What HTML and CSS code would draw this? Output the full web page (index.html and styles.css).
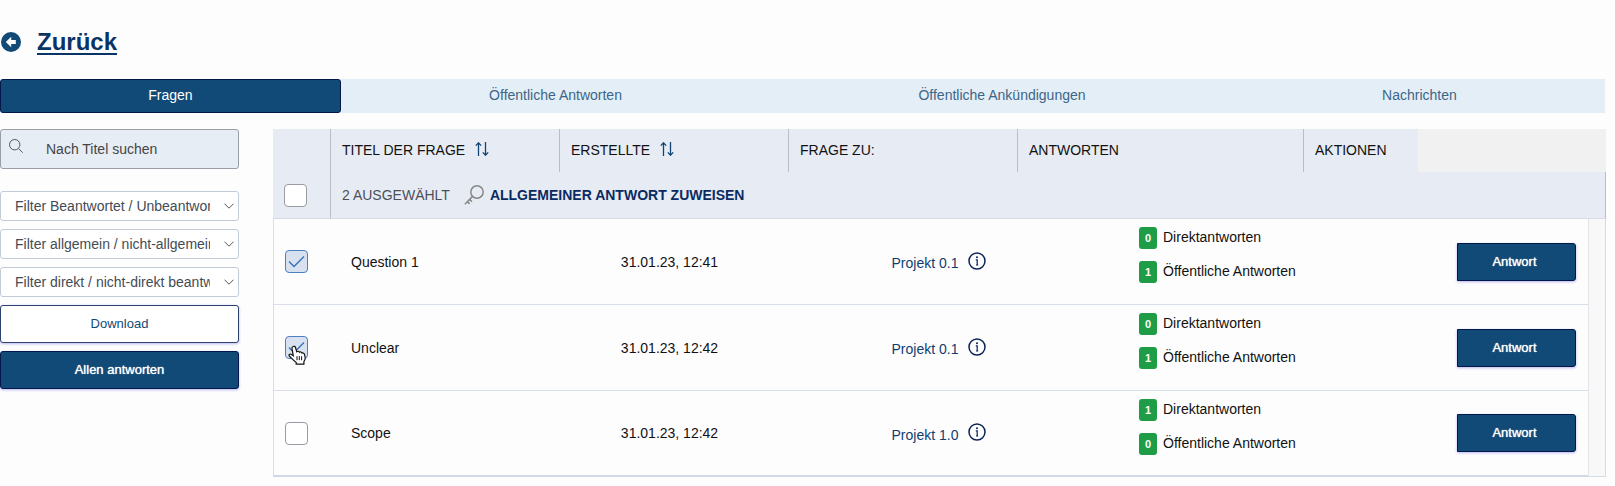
FILE: index.html
```
<!DOCTYPE html>
<html lang="de">

<head>
    <meta charset="UTF-8">
    <meta name="viewport" content="width=device-width, initial-scale=1.0">
    <title>Fragen</title>
    <link rel="stylesheet" href="styles.css">
</head>

<body>
    <svg class="sprite" aria-hidden="true">
        <symbol id="chevron" viewBox="0 0 10 6">
            <path d="M.5.7 5 5.2 9.500.7" fill="none" stroke="currentColor" />
        </symbol>
        <symbol id="sort" viewBox="0 0 14 14">
            <path d="M3.500 14V.8M.8 3.600 3.500.8l2.700 2.800M10.500 0v13.200M7.800 10.400l2.700 2.800 2.700-2.800" fill="none" stroke="currentColor" stroke-width="1.300" />
        </symbol>
        <symbol id="info" viewBox="0 0 18 18">
            <circle cx="9" cy="9" r="8" fill="none" stroke="currentColor" stroke-width="1.500" />
            <path d="M7.800 7.800H9.200V13M8 13h2.200" fill="none" stroke="currentColor" stroke-width="1.200" />
            <circle cx="9" cy="5.300" r="1" fill="currentColor" />
        </symbol>
    </svg>

    <header class="page-header">
        <svg class="back-icon" viewBox="0 0 20 20" aria-hidden="true">
            <circle cx="10" cy="10" r="10" fill="#114a76" />
            <path d="M10.200 4.800v3.300h4.600v3.800h-4.600v3.300L4.800 10z" fill="#fff" />
        </svg>
        <a class="back-link" href="#">Zurück</a>
    </header>

    <nav class="tabs">
        <a class="tab active" href="#">Fragen</a>
        <a class="tab" href="#">Öffentliche Antworten</a>
        <a class="tab" href="#">Öffentliche Ankündigungen</a>
        <a class="tab" href="#">Nachrichten</a>
    </nav>

    <main class="content">
        <aside class="sidebar">
            <label class="search">
                <svg class="search-icon" viewBox="0 0 14 14" aria-hidden="true">
                    <circle cx="5.700" cy="5.700" r="5.200" fill="none" stroke="currentColor" />
                    <path d="m9.500 9.500 4.200 4.200" stroke="currentColor" />
                </svg>
                <input type="text" placeholder="Nach Titel suchen" aria-label="Nach Titel suchen">
            </label>
            <div class="filter">
                <select aria-label="Filter Beantwortet">
                    <option>Filter Beantwortet / Unbeantwortet</option>
                </select>
                <svg class="chevron"><use href="#chevron" /></svg>
            </div>
            <div class="filter">
                <select aria-label="Filter allgemein">
                    <option>Filter allgemein / nicht-allgemein</option>
                </select>
                <svg class="chevron"><use href="#chevron" /></svg>
            </div>
            <div class="filter">
                <select aria-label="Filter direkt">
                    <option>Filter direkt / nicht-direkt beantwortet</option>
                </select>
                <svg class="chevron"><use href="#chevron" /></svg>
            </div>
            <button class="btn btn-outline" type="button">Download</button>
            <button class="btn" type="button">Allen antworten</button>
        </aside>

        <table class="questions">
            <colgroup>
                <col class="col-check">
                <col class="col-text">
                <col class="col-text">
                <col class="col-text">
                <col class="col-answers">
                <col class="col-actions">
                <col>
                <col class="col-scroll">
            </colgroup>
            <thead>
                <tr class="head-row">
                    <td></td>
                    <th>Titel der Frage <svg class="sort"><use href="#sort" /></svg></th>
                    <th>Erstellte <svg class="sort"><use href="#sort" /></svg></th>
                    <th>Frage zu:</th>
                    <th>Antworten</th>
                    <th>Aktionen</th>
                    <td class="head-rest" colspan="2"></td>
                </tr>
                <tr class="bulk-row">
                    <td class="check"><input type="checkbox" aria-label="Alle auswählen"></td>
                    <td class="bulk-cell" colspan="7">
                        <div class="bulk">
                            <span>2 ausgewählt</span>
                            <button class="assign" type="button">
                                <svg class="key" viewBox="0 0 20 20" aria-hidden="true">
                                    <circle cx="13" cy="7" r="6.200" />
                                    <path d="M8.600 11.400.8 19.200M5.600 14.400l2.300 2.300M3.400 16.600l2.300 2.300" />
                                </svg>
                                Allgemeiner Antwort zuweisen
                            </button>
                        </div>
                    </td>
                </tr>
            </thead>
            <tbody>
                <tr>
                    <td class="check"><input type="checkbox" aria-label="Question 1" checked></td>
                    <td class="title">Question 1</td>
                    <td class="date">31.01.23, 12:41</td>
                    <td class="project">
                        <div class="project-box">
                            <a href="#">Projekt 0.1</a>
                            <svg class="info"><use href="#info" /></svg>
                        </div>
                    </td>
                    <td class="answers">
                        <div class="answer"><span class="badge">0</span>Direktantworten</div>
                        <div class="answer"><span class="badge">1</span>Öffentliche Antworten</div>
                    </td>
                    <td class="action" colspan="2"><button class="btn" type="button">Antwort</button></td>
                    <td class="scroll" rowspan="3"></td>
                </tr>
                <tr>
                    <td class="check">
                        <input type="checkbox" aria-label="Unclear" checked>
                        <svg class="pointer" viewBox="0 0 18 20" aria-hidden="true">
                            <path d="M5.200 1.500c1-.6 2 0 2.300 1l1.200 4.200c.9-.8 2.300-.5 2.700.5 1-.6 2.200-.2 2.500.8 1.200-.4 2.400.3 2.700 1.600l.6 3.400c.1 1.500-.9 2.400-1.300 3.600v2.500H8.200v-1.700C5.600 15.700 4 13.700 1.300 11c-.8-1 .3-2.500 1.700-1.800l2.300 1.500L4 3.500c-.1-.9.400-1.700 1.200-2z" fill="#fff" stroke="#111" stroke-width="1.200" />
                            <path d="M9 11.200v4M11.300 11.200v4M13.600 11.200v4" stroke="#111" />
                        </svg>
                    </td>
                    <td class="title">Unclear</td>
                    <td class="date">31.01.23, 12:42</td>
                    <td class="project">
                        <div class="project-box">
                            <a href="#">Projekt 0.1</a>
                            <svg class="info"><use href="#info" /></svg>
                        </div>
                    </td>
                    <td class="answers">
                        <div class="answer"><span class="badge">0</span>Direktantworten</div>
                        <div class="answer"><span class="badge">1</span>Öffentliche Antworten</div>
                    </td>
                    <td class="action" colspan="2"><button class="btn" type="button">Antwort</button></td>
                </tr>
                <tr>
                    <td class="check"><input type="checkbox" aria-label="Scope"></td>
                    <td class="title">Scope</td>
                    <td class="date">31.01.23, 12:42</td>
                    <td class="project">
                        <div class="project-box">
                            <a href="#">Projekt 1.0</a>
                            <svg class="info"><use href="#info" /></svg>
                        </div>
                    </td>
                    <td class="answers">
                        <div class="answer"><span class="badge">1</span>Direktantworten</div>
                        <div class="answer"><span class="badge">0</span>Öffentliche Antworten</div>
                    </td>
                    <td class="action" colspan="2"><button class="btn" type="button">Antwort</button></td>
                </tr>
            </tbody>
        </table>
    </main>
</body>

</html>
```
FILE: styles.css
```
* {
    box-sizing: border-box;
}

body {
    background-color: #fefdfe;
    color: #111;
    font-family: "Liberation Sans", Arial, sans-serif;
    font-size: 14px;
    line-height: 20px;
    margin: 0;
    padding: 28px 9px 0 0;
}

button,
input,
select {
    font: inherit;
    color: inherit;
    margin: 0;
}

a {
    color: #0f3d70;
    text-decoration: none;
}

.sprite {
    display: none;
}

.page-header {
    display: flex;
    align-items: center;
    gap: 16px;
    padding-left: 1px;
    margin-bottom: 23px;
}

.back-icon {
    width: 20px;
    height: 20px;
}

.back-link {
    color: #0a3466;
    font-size: 24px;
    font-weight: bold;
    line-height: 28px;
    text-decoration: underline;
    text-decoration-thickness: 2px;
    text-underline-offset: 3px;
}

.tabs {
    display: flex;
    background-color: #e4eef6;
    margin-right: 1px;
}

.tab {
    flex: 1 1 auto;
    padding: 5px 0 7px;
    border: 1px solid transparent;
    color: #3c6688;
    text-align: center;
}

.tab.active {
    background-color: #114a76;
    border-color: #02174a;
    border-radius: 3px;
    color: #fff;
}

.content {
    display: flex;
    align-items: flex-start;
    gap: 34px;
    margin-top: 16px;
}

/* sidebar */

.sidebar {
    display: flex;
    flex-direction: column;
    flex: 0 0 239px;
    gap: 8px;
}

.search {
    display: flex;
    align-items: center;
    height: 40px;
    margin-bottom: 14px;
    padding-left: 8px;
    background-color: #e7edf4;
    border: 1px solid #999fa5;
    border-radius: 3px;
}

.search-icon {
    flex: none;
    width: 14px;
    height: 14px;
    margin-bottom: 6px;
    color: #555;
}

.search input {
    flex: 1;
    min-width: 0;
    padding: 0 0 0 23px;
    background: none;
    border: 0;
}

.search input::placeholder {
    color: #444;
    opacity: 1;
}

.filter {
    display: grid;
    align-items: center;
}

.filter select {
    grid-area: 1 / 1;
    appearance: none;
    width: 100%;
    height: 30px;
    padding: 0 28px 0 14px;
    background-color: #fff;
    border: 1px solid #c3ccd6;
    border-radius: 3px;
    color: #444c55;
}

.chevron {
    grid-area: 1 / 1;
    justify-self: end;
    width: 10px;
    height: 6px;
    margin-right: 5px;
    color: #555;
    pointer-events: none;
}

.btn {
    height: 38px;
    background-color: #114a76;
    border: 1px solid #02174a;
    border-radius: 3px;
    box-shadow: 0 1px 3px #b9b5ee;
    color: #fff;
    font-size: 13px;
    text-shadow: 0 0 1px #fff;
}

.btn-outline {
    background-color: #fff;
    border-color: #2a4370;
    color: #114a76;
    text-shadow: none;
}

/* questions table */

.questions {
    flex: 1;
    width: 100%;
    min-width: 0;
    table-layout: fixed;
    border-collapse: separate;
    border-spacing: 0;
}

.col-check {
    width: 57px;
}

.col-text {
    width: 229px;
}

.col-answers {
    width: 286px;
}

.col-actions {
    width: 115px;
}

.col-scroll {
    width: 18px;
}

th,
td {
    padding: 0;
}

.head-row {
    height: 43px;
    background-color: #e7ecf4;
}

.head-row th {
    padding: 0 11px 2px;
    border-left: 1px solid #b9bec8;
    font-weight: normal;
    text-align: left;
    text-transform: uppercase;
}

.head-row .head-rest {
    background-color: #f1f1f1;
}

.sort {
    width: 14px;
    height: 14px;
    margin-left: 6px;
    color: #0f4476;
    vertical-align: -1px;
}

.bulk-row {
    height: 47px;
    background-color: #e7ecf4;
}

.bulk-row td {
    border-bottom: 1px solid #d5dce4;
}

.bulk-row .bulk-cell {
    padding-left: 11px;
    border-left: 1px solid #b9bec8;
    border-right: 1px solid #b9bec8;
}

.bulk {
    display: flex;
    align-items: center;
    gap: 14px;
    color: #4b5058;
    text-transform: uppercase;
}

.assign {
    display: flex;
    align-items: center;
    gap: 6px;
    padding: 0;
    background: none;
    border: 0;
    color: #0a2a62;
    font-weight: bold;
    text-transform: uppercase;
}

.key {
    width: 20px;
    height: 20px;
    fill: none;
    stroke: #888;
    stroke-width: 1.5;
}

.check {
    position: relative;
    padding-left: 11px;
}

.check input {
    appearance: none;
    display: block;
    width: 23px;
    height: 23px;
    background: #fff center / 17px 13px no-repeat;
    border: 1px solid #989ba2;
    border-radius: 4px;
}

.check input:checked {
    background-color: #d7e1ef;
    background-image: url("data:image/svg+xml,%3Csvg xmlns='http://www.w3.org/2000/svg' viewBox='0 0 17 13'%3E%3Cpath d='M1 6.500 6 11.500 16 1.500' fill='none' stroke='%233471bd' stroke-width='1.300'/%3E%3C/svg%3E");
    border-color: #4d7fc1;
}

/* hand cursor over the second checkbox */
.pointer {
    position: absolute;
    left: 14px;
    top: 40px;
    width: 18px;
    height: 20px;
}

tbody tr {
    height: 86px;
}

tbody td {
    border-bottom: 1px solid #d8dfe8;
}

tbody tr:last-child td {
    border-bottom: 2px solid #cfd8e4;
}

tbody .check {
    border-left: 1px solid #d8dfe8;
}

.title {
    padding-left: 21px;
}

.date {
    padding-right: 8px;
    text-align: center;
}

.project-box {
    display: flex;
    align-items: center;
    justify-content: center;
    gap: 10px;
    padding: 0 0 2px 73px;
}

.project-box a {
    padding-top: 5px;
}

.info {
    width: 18px;
    height: 18px;
    color: #0a2458;
}

.answers {
    padding: 8px 0 0 122px;
    vertical-align: top;
}

.answer {
    display: flex;
    gap: 6px;
    height: 22px;
    margin-bottom: 12px;
    white-space: nowrap;
}

.badge {
    flex: none;
    width: 18px;
    height: 22px;
    background-color: #1f9d46;
    border-radius: 3px;
    color: #fff;
    font-size: 11px;
    font-weight: bold;
    line-height: 22px;
    text-align: center;
}

.action {
    padding-right: 12px;
    text-align: right;
}

.action .btn {
    width: 119px;
    padding: 0 8px 0 4px;
    border-radius: 0 3px 3px 0;
}

.scroll {
    background-color: #f8f8f9;
    border-left: 1px solid #e2e5e9;
    border-right: 1px solid #d5dce4;
    border-bottom: 1px solid #d5dce4;
}
```
